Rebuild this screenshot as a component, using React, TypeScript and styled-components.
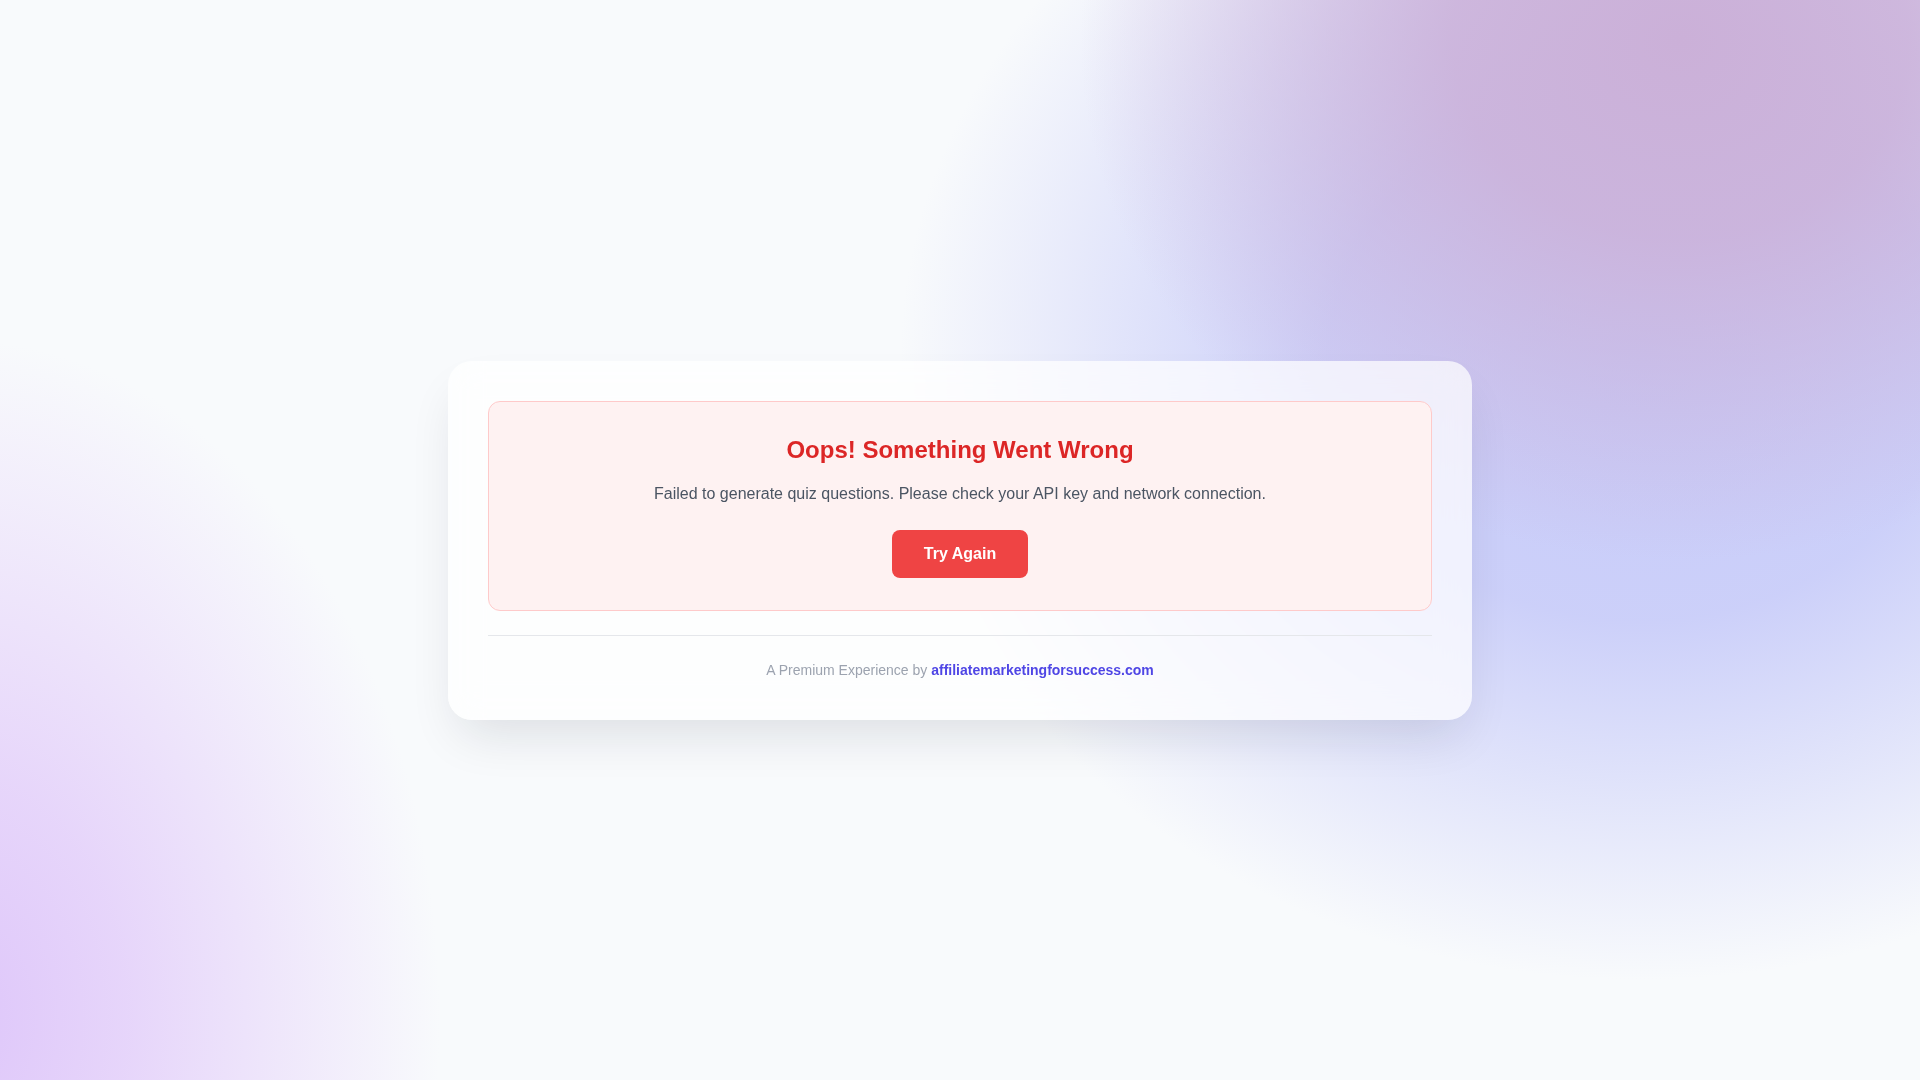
import React from 'react'
import styled, { createGlobalStyle } from 'styled-components'

const GlobalStyle = createGlobalStyle`
  * {
    box-sizing: border-box;
  }
  html, body {
    margin: 0;
    padding: 0;
  }
  body {
    font-family: "Liberation Sans", Arial, sans-serif;
    background: #f8fafc;
  }
`

const Page = styled.div`
  min-height: 100vh;
  display: flex;
  align-items: center;
  justify-content: center;
  padding: 16px;
  background:
    radial-gradient(ellipse 600px 520px at 1680px 40px, rgba(203, 176, 216, 1) 0%, rgba(203, 176, 216, 0.85) 38%, rgba(203, 176, 216, 0) 100%),
    radial-gradient(ellipse 740px 620px at 1640px 360px, rgba(199, 203, 249, 1) 0%, rgba(199, 203, 249, 0.9) 42%, rgba(199, 203, 249, 0) 100%),
    radial-gradient(ellipse 480px 680px at -40px 1020px, rgba(222, 198, 250, 1) 0%, rgba(226, 204, 250, 0.8) 35%, rgba(226, 204, 250, 0) 100%),
    #f8fafc;
`

const Card = styled.div`
  width: 100%;
  max-width: 1024px;
  padding: 40px;
  border-radius: 24px;
  background: rgba(255, 255, 255, 0.72);
  backdrop-filter: blur(16px);
  box-shadow: 0 25px 50px -12px rgba(15, 23, 42, 0.12);
`

const ErrorBox = styled.div`
  padding: 32px;
  border: 1px solid #fecaca;
  border-radius: 12px;
  background: #fef2f2;
  text-align: center;
`

const Title = styled.h2`
  margin: 0 0 16px;
  font-size: 24px;
  line-height: 32px;
  font-weight: 700;
  color: #dc2626;
`

const Message = styled.p`
  margin: 0 0 24px;
  font-size: 16px;
  line-height: 24px;
  color: #4b5563;
`

const RetryButton = styled.button`
  padding: 12px 32px;
  border: none;
  border-radius: 8px;
  background: #ef4444;
  color: #ffffff;
  font-family: inherit;
  font-size: 16px;
  line-height: 24px;
  font-weight: 700;
  cursor: pointer;
`

const Footer = styled.footer`
  margin-top: 24px;
  padding-top: 24px;
  border-top: 1px solid #e5e7eb;
  text-align: center;
  font-size: 14px;
  line-height: 20px;
  color: #9ca3af;
`

const Brand = styled.a`
  color: #4f46e5;
  font-weight: 700;
  text-decoration: none;
`

export default function App() {
  return (
    <>
      <GlobalStyle />
      <Page>
        <Card>
          <ErrorBox>
            <Title>Oops! Something Went Wrong</Title>
            <Message>Failed to generate quiz questions. Please check your API key and network connection.</Message>
            <RetryButton>Try Again</RetryButton>
          </ErrorBox>
          <Footer>
            A Premium Experience by <Brand href="#">affiliatemarketingforsuccess.com</Brand>
          </Footer>
        </Card>
      </Page>
    </>
  )
}
